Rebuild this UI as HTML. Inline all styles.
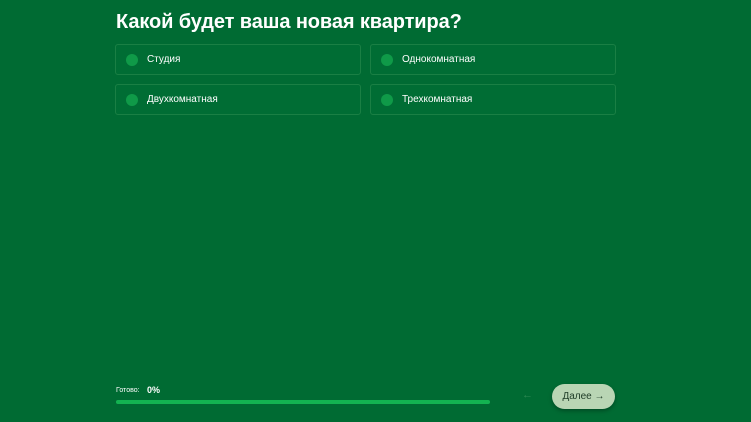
<!DOCTYPE html>
<html><head><meta charset="utf-8"><style>
body{margin:0;width:751px;height:422px;background:#006b33;font-family:"Liberation Sans",sans-serif;position:relative;overflow:hidden;color:#fff}
h1{position:absolute;left:116px;top:11px;margin:0;font-size:20px;font-weight:bold;letter-spacing:-0.1px}
.opt{position:absolute;width:244px;height:29px;border:1px solid #1a7f44;border-radius:3px;background:#006d34}
.opt i{position:absolute;left:10px;top:9px;width:12px;height:12px;border-radius:50%;background:#0f9a48}
.opt span{position:absolute;left:31px;top:9px;font-size:10px}
.pl{position:absolute;left:116px;top:387px;font-size:7px}
.pv{position:absolute;left:147px;top:385px;font-size:9px;font-weight:bold}
.bar{position:absolute;left:116px;top:400px;width:374px;height:4px;border-radius:2px;background:#13b351}
.btn{position:absolute;left:552px;top:384px;width:63px;height:25px;border-radius:13px;background:#b9d5b4;color:#1d3b26;font-size:10px;text-align:center;line-height:25px;box-shadow:0 2px 4px rgba(0,0,0,.3)}
.back{position:absolute;left:522px;top:389px;color:#2f8b55;font-size:11px}
</style></head><body>
<h1>Какой будет ваша новая квартира?</h1>
<div class="opt" style="left:115px;top:44px"><i></i><span>Студия</span></div>
<div class="opt" style="left:370px;top:44px"><i></i><span>Однокомнатная</span></div>
<div class="opt" style="left:115px;top:84px"><i></i><span>Двухкомнатная</span></div>
<div class="opt" style="left:370px;top:84px"><i></i><span>Трехкомнатная</span></div>
<div class="pl">Готово:</div><div class="pv">0%</div>
<div class="bar"></div>
<div class="back">←</div>
<div class="btn">Далее →</div>
</body></html>
